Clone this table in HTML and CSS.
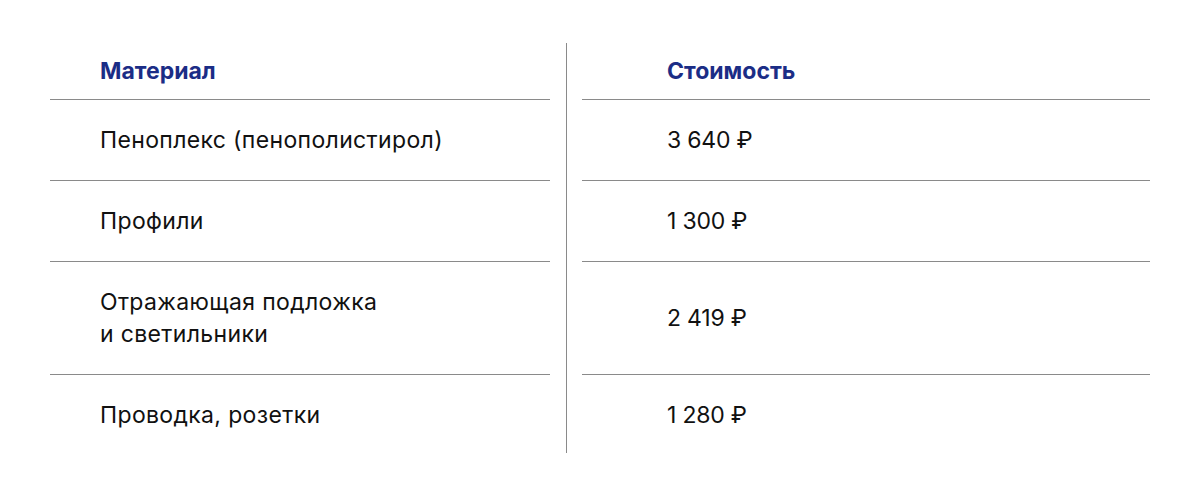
FILE: index.html
```html
<!DOCTYPE html>
<html lang="ru">
<head>
<meta charset="utf-8">
<link rel="stylesheet" href="styles.css">
</head>
<body>
<div class="table">
  <div class="divider"></div>
  <div class="cell head left">Материал</div>
  <div class="cell head right">Стоимость</div>
  <div class="cell left">Пеноплекс (пенополистирол)</div>
  <div class="cell right">3 640 ₽</div>
  <div class="cell left">Профили</div>
  <div class="cell right">1 300 ₽</div>
  <div class="cell left">Отражающая подложка<br>и светильники</div>
  <div class="cell right">2 419 ₽</div>
  <div class="cell left last">Проводка, розетки</div>
  <div class="cell right last">1 280 ₽</div>
</div>
</body>
</html>
```
FILE: styles.css
```css
html, body {
  margin: 0;
  background: #ffffff;
}
body {
  font-family: "Inter", "Liberation Sans", sans-serif;
  color: #111111;
}
.table {
  display: grid;
  grid-template-columns: 500px 32px 568px;
  margin: 43px 0 0 50px;
  width: 1100px;
}
.divider {
  grid-column: 2;
  grid-row: 1 / 6;
  display: flex;
  justify-content: center;
}
.divider::before {
  content: "";
  width: 1px;
  background: #8a8a8a;
}
.cell {
  display: flex;
  align-items: center;
  font-size: 23px;
  letter-spacing: 0.35px;
  line-height: 32px;
  padding: 24px 0;
  border-bottom: 1px solid #8a8a8a;
}
.cell.left {
  grid-column: 1;
  padding-left: 50px;
}
.cell.right {
  grid-column: 3;
  padding-left: 85px;
  letter-spacing: -0.2px;
}
.cell.head {
  padding-top: 12px;
  padding-bottom: 12px;
  font-weight: 700;
  letter-spacing: 0;
  color: #1b2d86;
}
.cell.last {
  border-bottom: none;
  padding-bottom: 22px;
}
```
